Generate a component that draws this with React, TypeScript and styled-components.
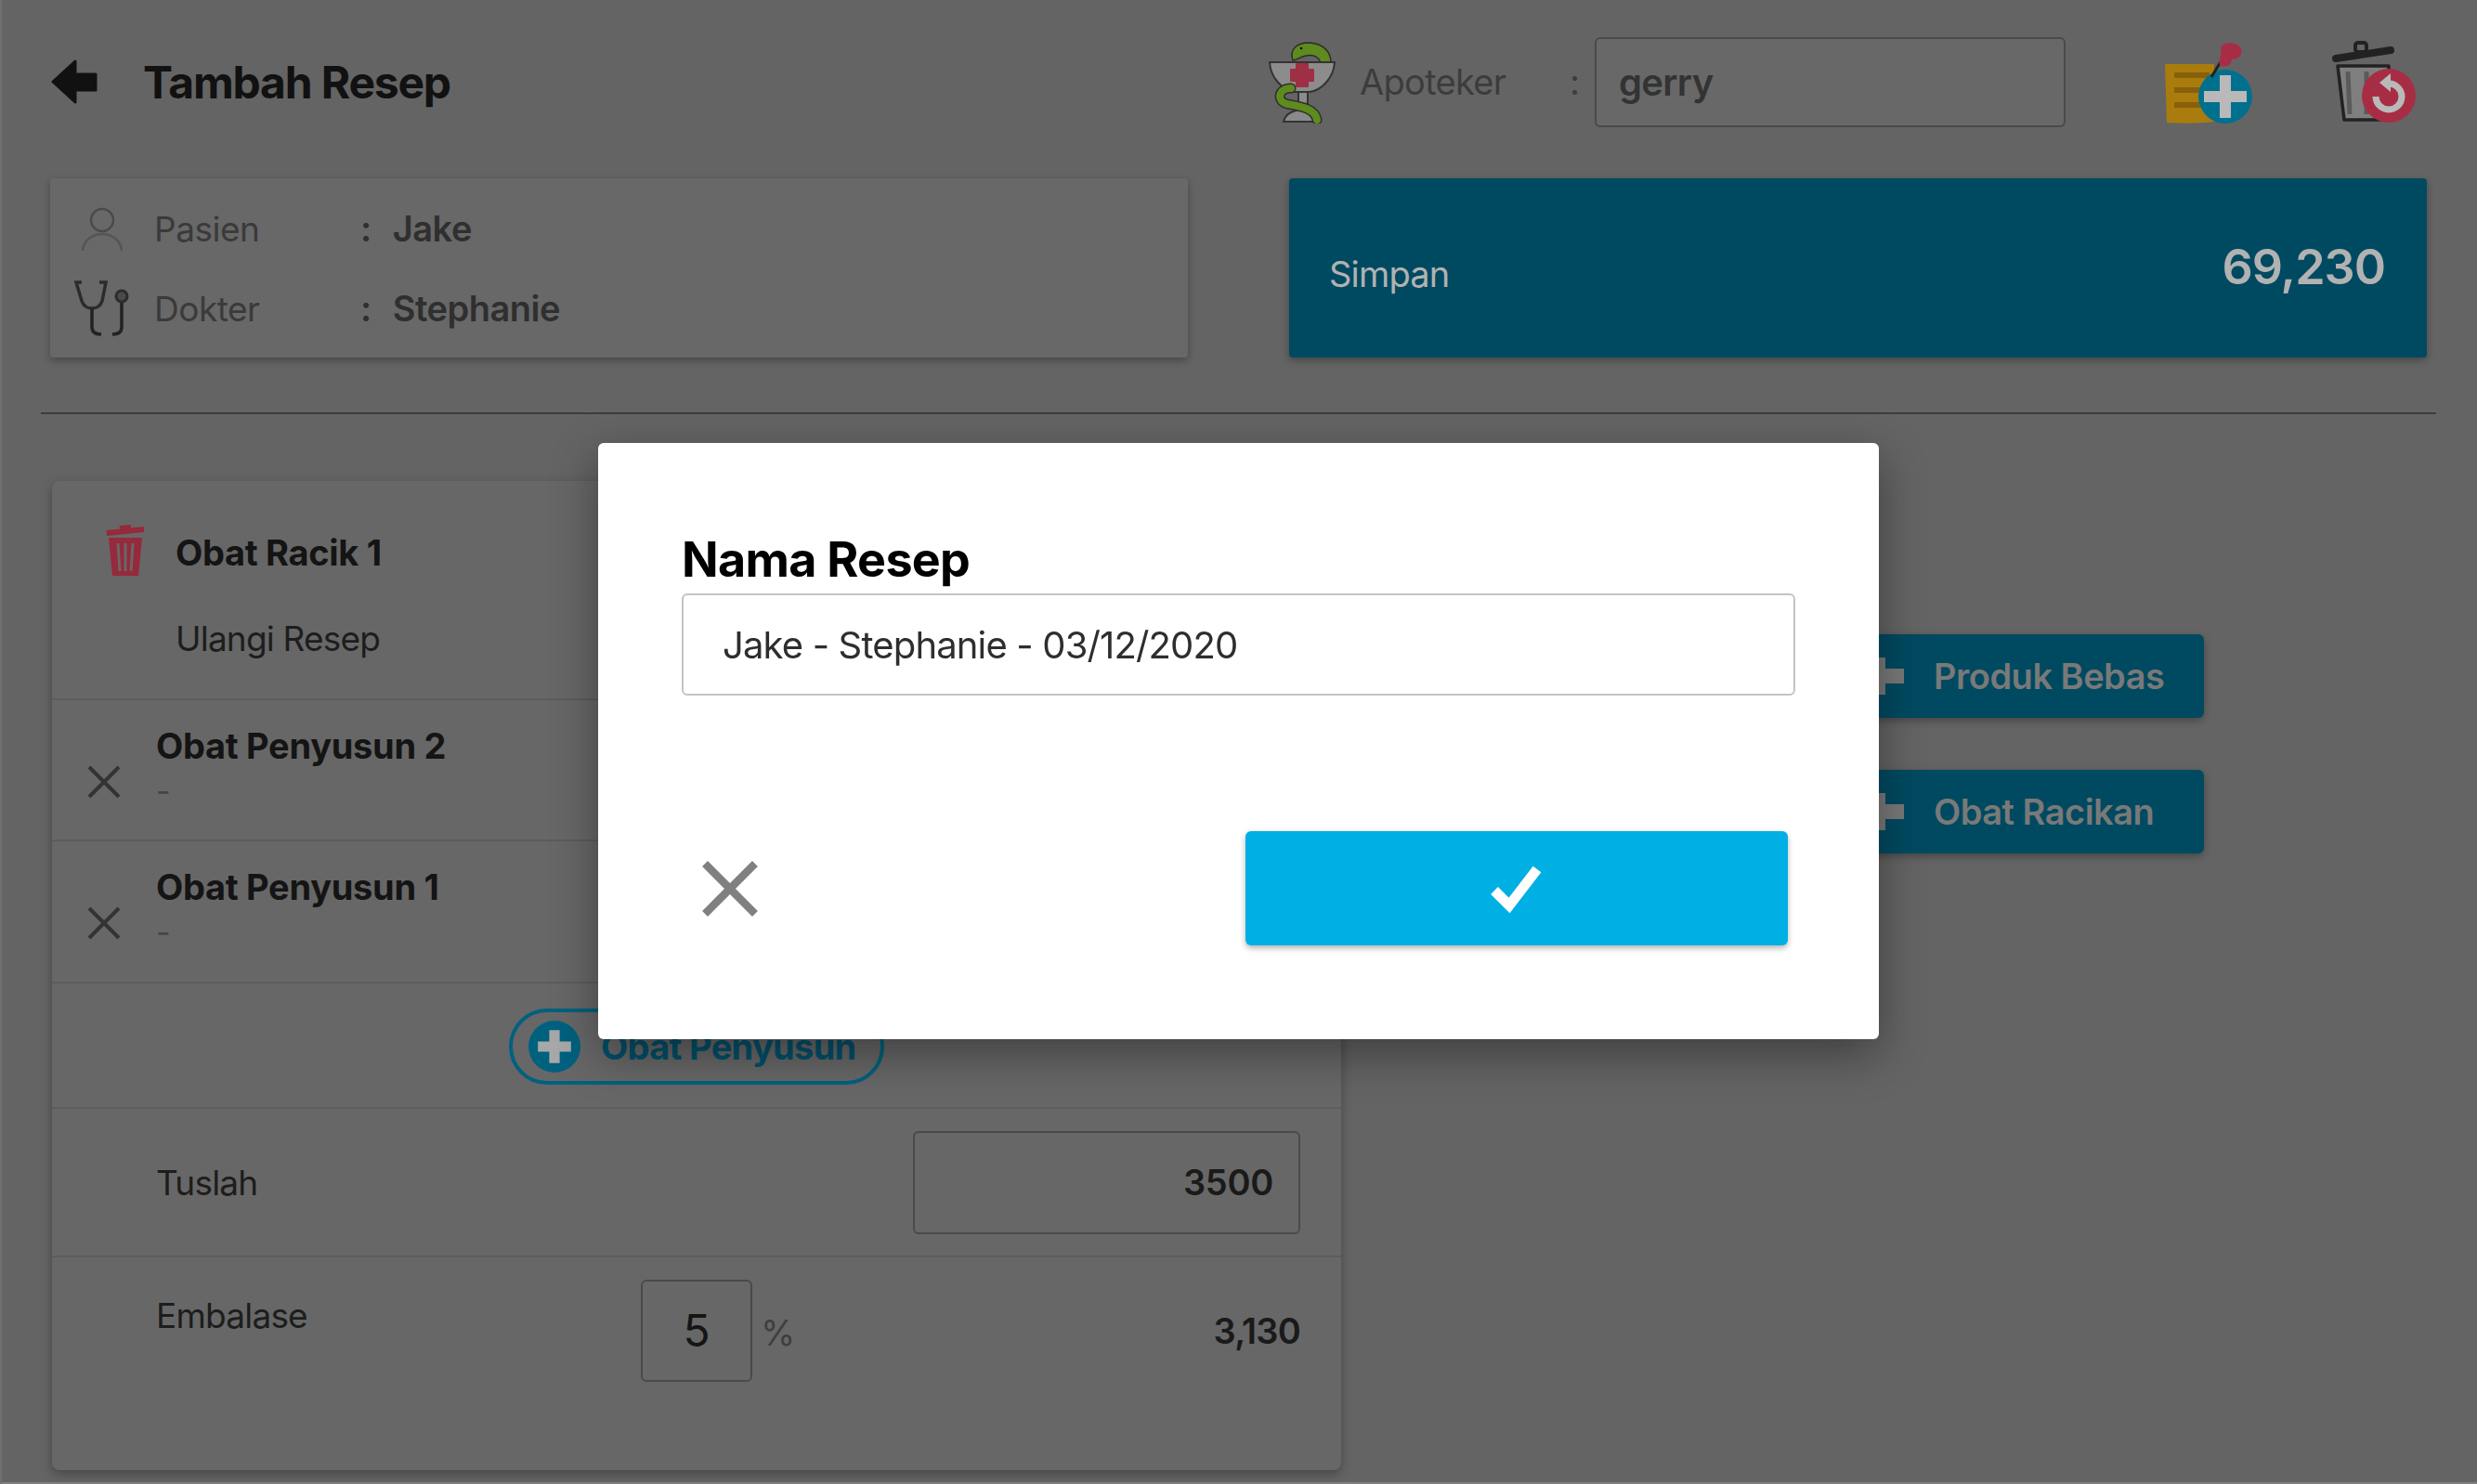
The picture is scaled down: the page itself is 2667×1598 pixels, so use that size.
import React from "react";
import styled, { createGlobalStyle } from "styled-components";

const Global = createGlobalStyle`
  html, body { margin: 0; padding: 0; height: 100%; overflow: hidden; background: #646464; }
  * { box-sizing: border-box; }
  body { font-family: "Inter", "Liberation Sans", sans-serif; color: #111; }
`;

const Page = styled.div`
  width: 2667px;
  height: 1598px;
  background: #646464;
  box-shadow: inset 2px 0 0 #707070, inset 0 -2px 0 #7f7f7f;
  overflow: hidden;
`;

const Header = styled.header`
  height: 176px;
  display: flex;
  align-items: center;
  padding: 0 60px 0 55px;
`;
const BackIcon = styled.svg`
  width: 50px;
  height: 48px;
  margin-right: 49px;
`;
const Title = styled.h1`
  margin: 0;
  font-size: 48px;
  font-weight: 700;
  letter-spacing: -1.2px;
  color: #111;
  flex: 1;
`;
const PharmIcon = styled.svg`
  width: 72px;
  height: 90px;
  margin-right: 26px;
`;
const ApotekerLabel = styled.span`
  width: 226px;
  font-size: 38px;
  letter-spacing: -0.7px;
  color: #3c3c3c;
`;
const Colon = styled.span`
  width: 27px;
  font-size: 38px;
  color: #3c3c3c;
`;
const ApotekerInput = styled.div`
  width: 507px;
  height: 97px;
  border: 2px solid #4a4a4a;
  border-radius: 6px;
  background: #686868;
  display: flex;
  align-items: center;
  padding-left: 24px;
  font-size: 40px;
  font-weight: 600;
  letter-spacing: -0.7px;
  color: #333;
  margin-right: 105px;
`;
const ToolIcon = styled.svg<{ $gap?: number }>`
  width: 100px;
  height: 90px;
  margin-right: ${(p) => p.$gap ?? 0}px;
`;

const Summary = styled.section`
  display: grid;
  grid-template-columns: 1225px 1225px;
  column-gap: 109px;
  padding: 16px 0 0 54px;
`;
const PatientCard = styled.div`
  height: 193px;
  background: #686868;
  border-radius: 4px;
  box-shadow: 0 3px 8px rgba(0, 0, 0, 0.3);
  padding: 11px 0 0 26px;
  display: grid;
  grid-template-columns: 60px 248px 1fr;
  grid-auto-rows: 86px;
  align-items: center;
`;
const PersonGlyph = styled.svg`
  width: 60px;
  height: 60px;
`;
const InfoLabel = styled.span`
  font-size: 37px;
  letter-spacing: -0.5px;
  padding-left: 26px;
  color: #3a3a3a;
`;
const InfoValue = styled.span`
  font-size: 38px;
  font-weight: 600;
  letter-spacing: -0.5px;
  word-spacing: 2.5px;
  color: #2f2f2f;
  white-space: pre;
`;
const TotalCard = styled.div`
  height: 193px;
  background: #004a61;
  border-radius: 4px;
  box-shadow: 0 3px 8px rgba(0, 0, 0, 0.3);
  display: flex;
  align-items: center;
  justify-content: space-between;
  padding: 0 45px 0 43px;
  color: #b2b2b2;
`;
const SimpanText = styled.span`
  font-size: 38px;
  letter-spacing: -0.8px;
  padding-top: 12px;
`;
const TotalValue = styled.span`
  font-size: 52px;
  font-weight: 600;
  letter-spacing: -1px;
  padding-bottom: 2px;
`;

const Divider = styled.hr`
  margin: 59px 44px 0;
  height: 2px;
  border: 0;
  background: #3d3d3d;
`;

const Main = styled.main`
  display: flex;
  padding: 72px 0 0 56px;
`;
const Panel = styled.section`
  width: 1388px;
  height: 1065px;
  background: #676767;
  border-radius: 8px;
  box-shadow: 0 4px 12px rgba(0, 0, 0, 0.3);
`;
const Row = styled.div<{ $h: number }>`
  height: ${(p) => p.$h}px;
  border-bottom: 2px solid #5c5c5c;
`;
const HeadRow = styled(Row)`
  display: grid;
  grid-template-columns: 133px 1fr;
  grid-template-rows: 47px 1fr;
  padding-top: 53px;
  align-items: center;
`;
const TrashGlyph = styled.svg`
  width: 44px;
  height: 58px;
  margin-left: 57px;
  margin-top: -6px;
`;
const RacikName = styled.div`
  font-size: 38px;
  font-weight: 700;
  letter-spacing: -0.3px;
  color: #141414;
`;
const Ulangi = styled.div`
  grid-column: 2;
  align-self: start;
  margin-top: 47px;
  font-size: 37px;
  letter-spacing: -0.8px;
  color: #1d1d1d;
`;
const DrugRow = styled(Row)`
  display: flex;
  padding: 24px 0 0 37px;
`;
const CrossGlyph = styled.svg`
  width: 38px;
  height: 38px;
  margin: 45px 37px 0 0;
`;
const DrugName = styled.div`
  font-size: 38px;
  font-weight: 700;
  letter-spacing: -0.3px;
  line-height: 50px;
  color: #141414;
`;
const DrugSub = styled.div`
  font-size: 34px;
  line-height: 48px;
  color: #454545;
`;
const AddRow = styled(Row)`
  display: flex;
  justify-content: center;
  padding: 27px 0 0 0;
`;
const Pill = styled.div`
  width: 404px;
  height: 82px;
  border: 4px solid #00617f;
  border-radius: 41px;
  display: flex;
  align-items: center;
  padding-left: 17px;
  gap: 22px;
  font-size: 38px;
  font-weight: 700;
  letter-spacing: -0.7px;
  color: #00506b;
`;
const PlusDot = styled.svg`
  width: 56px;
  height: 56px;
`;
const TuslahRow = styled(Row)`
  display: flex;
  align-items: center;
  justify-content: space-between;
  padding: 0 44px 0 112px;
`;
const RowLabel = styled.span`
  font-size: 37px;
  letter-spacing: -0.8px;
  color: #1d1d1d;
`;
const NumberBox = styled.div`
  width: 417px;
  height: 111px;
  border: 2px solid #4a4a4a;
  border-radius: 6px;
  display: flex;
  align-items: center;
  justify-content: flex-end;
  padding-right: 27px;
  font-size: 38px;
  font-weight: 600;
  letter-spacing: -0.3px;
  color: #1a1a1a;
`;
const EmbalaseRow = styled.div`
  display: flex;
  padding: 24px 44px 0 112px;
`;
const EmbalaseLabel = styled(RowLabel)`
  width: 522px;
  padding-top: 16px;
`;
const PercentBox = styled.div`
  width: 120px;
  height: 110px;
  border: 2px solid #4a4a4a;
  border-radius: 6px;
  display: flex;
  align-items: center;
  justify-content: center;
  padding-bottom: 2px;
  font-size: 48px;
  color: #151515;
`;
const Percent = styled.span`
  font-size: 38px;
  color: #3f3f3f;
  margin: 34px 0 0 9px;
  flex: 1;
`;
const Amount = styled.span`
  font-size: 38px;
  font-weight: 600;
  letter-spacing: -0.8px;
  color: #1a1a1a;
  padding-top: 32px;
`;

const SideActions = styled.aside`
  margin: 165px 0 0 110px;
  width: 819px;
  display: flex;
  flex-direction: column;
  gap: 56px;
`;
const ActionButton = styled.div`
  height: 90px;
  background: #004a61;
  border-radius: 6px;
  box-shadow: 0 3px 8px rgba(0, 0, 0, 0.3);
  display: flex;
  align-items: center;
  padding-left: 440px;
  gap: 32px;
  font-size: 38px;
  font-weight: 600;
  letter-spacing: -0.5px;
  color: #797979;
`;
const ActionPlus = styled.svg`
  width: 56px;
  height: 40px;
`;

const Backdrop = styled.div`
  position: fixed;
  inset: 0 0 2px 0;
  display: flex;
  align-items: center;
  justify-content: center;
`;
const Dialog = styled.div`
  width: 1379px;
  height: 642px;
  background: #fff;
  border-radius: 6px;
  box-shadow: 0 16px 50px rgba(0, 0, 0, 0.38);
  padding: 94px 90px 0;
`;
const DialogTitle = styled.h2`
  margin: 0 0 4px;
  font-size: 52px;
  line-height: 64px;
  font-weight: 700;
  letter-spacing: -0.7px;
  color: #000;
`;
const NameInput = styled.div`
  height: 110px;
  border: 2px solid #c4c4c4;
  border-radius: 6px;
  display: flex;
  align-items: center;
  padding-left: 42px;
  font-size: 40px;
  letter-spacing: -0.85px;
  color: #2e2e2e;
`;
const DialogActions = styled.div`
  display: flex;
  align-items: center;
  justify-content: space-between;
  margin: 146px 8px 0 20px;
`;
const CloseGlyph = styled.svg`
  width: 64px;
  height: 64px;
`;
const ConfirmButton = styled.div`
  width: 584px;
  height: 123px;
  background: #00afe3;
  border-radius: 6px;
  box-shadow: 0 3px 6px rgba(0, 0, 0, 0.3);
  display: flex;
  align-items: center;
  justify-content: center;
`;
const CheckGlyph = styled.svg`
  width: 56px;
  height: 52px;
`;

const Cross = ({ color, w }: { color: string; w: number }) => (
  <path d="M3 3L35 35M35 3L3 35" stroke={color} strokeWidth={w} fill="none" />
);

const Plus = () => (
  <path d="M20 0H36V12H56V28H36V40H20V28H0V12H20Z" fill="#797979" />
);

export default function App() {
  return (
    <Page>
      <Global />
      <Header>
        <BackIcon viewBox="0 0 50 48">
          <path d="M26 2L2 24L26 46V33H48V16H26Z" fill="#111" stroke="#111" strokeWidth="3" strokeLinejoin="round" />
        </BackIcon>
        <Title>Tambah Resep</Title>
        <PharmIcon viewBox="0 0 72 90">
          <path d="M26 22C22 10 30 3 44 3C58 4 67 12 67 24L56 24C52 16 46 16 40 17C34 18 30 22 26 22Z" fill="#5f8a1e" stroke="#2c2c2c" strokeWidth="1.5" />
          <circle cx="35" cy="9" r="1.3" fill="#111" />
          <path d="M1 24H71C70 40 58 54 44 56H28C14 54 2 40 1 24Z" fill="#8c8c8c" stroke="#333" strokeWidth="2" />
          <path d="M30 26H42V32H48V44H42V50H30V44H24V32H30Z" fill="#9f2f44" stroke="#9f2f44" strokeWidth="2" strokeLinejoin="round" />
          <path d="M32 56H42V72H32Z" fill="#8c8c8c" stroke="#333" strokeWidth="2" />
          <path d="M16 88C18 78 30 75 36 75C46 75 54 80 56 88Z" fill="#8a8a8a" stroke="#333" strokeWidth="2" />
          <path d="M24 52C10 52 8 66 20 69C36 72 50 74 52 86" fill="none" stroke="#2e2e2e" strokeWidth="11" strokeLinecap="round" />
          <path d="M24 52C10 52 8 66 20 69C36 72 50 74 52 86" fill="none" stroke="#5f8a1e" strokeWidth="8" strokeLinecap="round" />
        </PharmIcon>
        <ApotekerLabel>Apoteker</ApotekerLabel>
        <Colon>:</Colon>
        <ApotekerInput>gerry</ApotekerInput>
        <ToolIcon viewBox="0 0 100 90" $gap={78}>
          <path d="M2 26H55V88C40 90 20 90 4 89Z" fill="#a97c0d" />
          <path d="M12 38H50M12 54H50M12 70H50" stroke="#86600a" strokeWidth="6" />
          <circle cx="67" cy="61" r="29" fill="#00708f" />
          <path d="M61 38H73V55H90V67H73V84H61V67H44V55H61Z" fill="#b9b9b9" />
          <path d="M52 40L63 22" stroke="#222" strokeWidth="3" />
          <path d="M62 8C66 1 80 2 84 9C86 16 82 21 74 21C74 28 66 30 61 27C59 22 64 16 62 8Z" fill="#a72d45" />
        </ToolIcon>
        <ToolIcon viewBox="0 0 90 90">
          <rect x="24" y="3" width="12" height="10" rx="3" fill="none" stroke="#222" strokeWidth="4" />
          <path d="M3 20L62 11" stroke="#222" strokeWidth="8" strokeLinecap="round" />
          <path d="M5 28H60V86H12Z" fill="#7f7f7f" stroke="#222" strokeWidth="3.5" strokeLinejoin="round" />
          <path d="M16 34L18 80M36 34V80" stroke="#5a5a5a" strokeWidth="5" />
          <circle cx="60" cy="60" r="29" fill="#a72d45" />
          <path d="M60 47A14 14 0 1 1 46 61" fill="none" stroke="#b9b9b9" strokeWidth="7" />
          <path d="M62 36V56L50 46Z" fill="#b9b9b9" />
        </ToolIcon>
      </Header>

      <Summary>
        <PatientCard>
          <PersonGlyph viewBox="0 0 60 60">
            <circle cx="30" cy="21" r="12" fill="none" stroke="#4a4a4a" strokeWidth="2.5" />
            <path d="M9 54C11 30 49 30 51 54" fill="none" stroke="#555" strokeWidth="2.5" />
          </PersonGlyph>
          <InfoLabel>Pasien</InfoLabel>
          <InfoValue>{":  Jake"}</InfoValue>
          <PersonGlyph viewBox="0 0 60 60">
            <path d="M8 2H2L8 22C10 28 14 30 19 30C24 30 28 28 30 22L34 2H27" fill="none" stroke="#2c2c2c" strokeWidth="3.5" />
            <path d="M19 30V50C19 56 23 58 29 58M51 24V50C51 56 47 58 41 58" fill="none" stroke="#222" strokeWidth="3.5" />
            <circle cx="51" cy="17" r="6" fill="#4a4a4a" stroke="#2c2c2c" strokeWidth="3" />
          </PersonGlyph>
          <InfoLabel>Dokter</InfoLabel>
          <InfoValue>{":  Stephanie"}</InfoValue>
        </PatientCard>
        <TotalCard>
          <SimpanText>Simpan</SimpanText>
          <TotalValue>69,230</TotalValue>
        </TotalCard>
      </Summary>

      <Divider />

      <Main>
        <Panel>
          <HeadRow $h={236}>
            <TrashGlyph viewBox="0 0 44 58">
              <path d="M2 11L42 7M16 6L28 5" stroke="#96293b" strokeWidth="6" />
              <path d="M4 16H40L36 57H8Z" fill="#96293b" />
              <path d="M14 22L16 52M22 22V52M30 22L28 52" stroke="#676767" strokeWidth="3" />
            </TrashGlyph>
            <RacikName>Obat Racik 1</RacikName>
            <Ulangi>Ulangi Resep</Ulangi>
          </HeadRow>
          <DrugRow $h={152}>
            <CrossGlyph viewBox="0 0 38 38"><Cross color="#333" w={4} /></CrossGlyph>
            <div>
              <DrugName>Obat Penyusun 2</DrugName>
              <DrugSub>-</DrugSub>
            </div>
          </DrugRow>
          <DrugRow $h={153}>
            <CrossGlyph viewBox="0 0 38 38"><Cross color="#333" w={4} /></CrossGlyph>
            <div>
              <DrugName>Obat Penyusun 1</DrugName>
              <DrugSub>-</DrugSub>
            </div>
          </DrugRow>
          <AddRow $h={135}>
            <Pill>
              <PlusDot viewBox="0 0 55 55">
                <circle cx="27.5" cy="27.5" r="27.5" fill="#00617f" />
                <path d="M22 10H33V22H45V33H33V45H22V33H10V22H22Z" fill="#a8a8a8" />
              </PlusDot>
              Obat Penyusun
            </Pill>
          </AddRow>
          <TuslahRow $h={160}>
            <RowLabel>Tuslah</RowLabel>
            <NumberBox>3500</NumberBox>
          </TuslahRow>
          <EmbalaseRow>
            <EmbalaseLabel>Embalase</EmbalaseLabel>
            <PercentBox>5</PercentBox>
            <Percent>%</Percent>
            <Amount>3,130</Amount>
          </EmbalaseRow>
        </Panel>
        <SideActions>
          <ActionButton>
            <ActionPlus viewBox="0 0 56 40"><Plus /></ActionPlus>
            Produk Bebas
          </ActionButton>
          <ActionButton>
            <ActionPlus viewBox="0 0 56 40"><Plus /></ActionPlus>
            Obat Racikan
          </ActionButton>
        </SideActions>
      </Main>

      <Backdrop>
        <Dialog>
          <DialogTitle>Nama Resep</DialogTitle>
          <NameInput>Jake - Stephanie - 03/12/2020</NameInput>
          <DialogActions>
            <CloseGlyph viewBox="0 0 38 38"><Cross color="#808080" w={5} /></CloseGlyph>
            <ConfirmButton>
              <CheckGlyph viewBox="0 0 56 52">
                <path d="M4 28L20 44L50 5" fill="none" stroke="#fff" strokeWidth="11" />
              </CheckGlyph>
            </ConfirmButton>
          </DialogActions>
        </Dialog>
      </Backdrop>
    </Page>
  );
}
